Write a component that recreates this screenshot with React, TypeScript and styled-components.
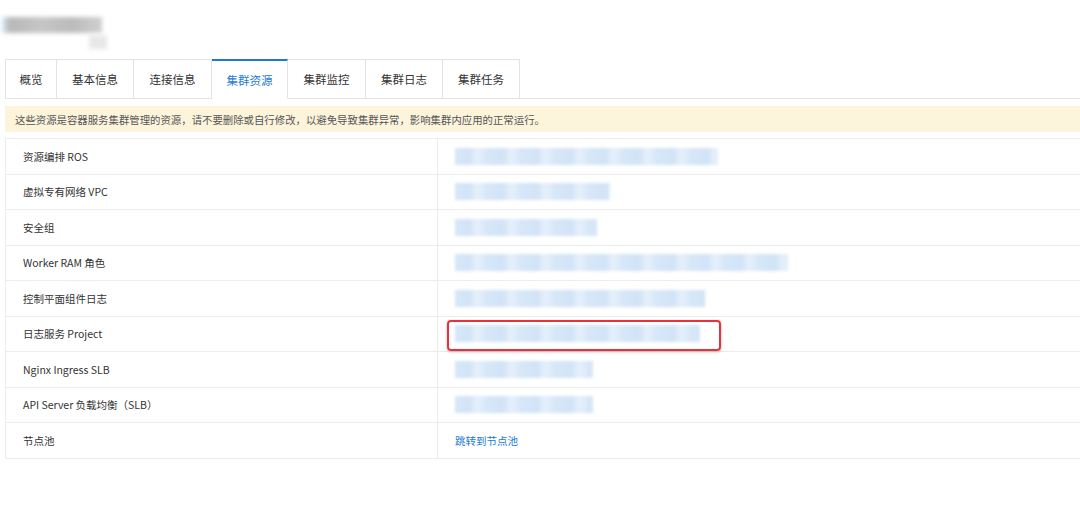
import React from 'react';
import styled, { createGlobalStyle } from 'styled-components';

const GlobalStyle = createGlobalStyle`
  html, body {
    margin: 0;
    padding: 0;
    background: #fff;
    font-family: "Noto Sans CJK SC", "Noto Sans", "Liberation Sans", sans-serif;
    color: #333;
  }
`;

const Page = styled.div`
  width: 1080px;
  height: 529px;
  overflow: hidden;
  padding-left: 5px;
  box-sizing: border-box;
`;

const TitleArea = styled.div`
  height: 59px;
  padding-top: 17px;
  box-sizing: border-box;
  display: flex;
  flex-direction: column;
  gap: 2px;
`;

const BlurTitle = styled.div`
  width: 100px;
  height: 16px;
  background: linear-gradient(90deg, #d6e9f8 0%, #b8b8b8 8%, #c6c6c6 40%, #bbbbbb 70%, #d0d0d0 100%);
  filter: blur(2px);
  margin-left: -3px;
`;

const BlurSub = styled.div`
  width: 18px;
  height: 14px;
  margin-left: 84px;
  background: #e8e8e8;
  filter: blur(2px);
`;

const Tabs = styled.div`
  display: flex;
  height: 40px;
  border-bottom: 1px solid #e3e3e3;
  box-sizing: border-box;
`;

const Tab = styled.div<{ $active?: boolean; $w: number }>`
  width: ${p => p.$w}px;
  box-sizing: border-box;
  display: flex;
  align-items: center;
  justify-content: center;
  font-size: 11.5px;
  color: ${p => (p.$active ? '#1b7ad6' : '#333')};
  background: #fff;
  border: 1px solid #e3e3e3;
  border-left: none;
  border-top: ${p => (p.$active ? '2px solid #1b7ad6' : '1px solid #e3e3e3')};
  border-bottom: ${p => (p.$active ? '1px solid #fff' : 'none')};
  margin-bottom: ${p => (p.$active ? '-1px' : '0')};
  &:first-child {
    border-left: 1px solid #e3e3e3;
  }
`;

const Notice = styled.div`
  margin-top: 7px;
  height: 26px;
  background: #fdf4dc;
  display: flex;
  align-items: center;
  padding-left: 10px;
  font-size: 10.4px;
  color: #555;
`;

const Table = styled.div`
  margin-top: 6px;
  border-top: 1px solid #ececec;
  border-left: 1px solid #ececec;
`;

const Row = styled.div`
  display: grid;
  grid-template-columns: 432px 1fr;
  height: 35.5px;
  border-bottom: 1px solid #ececec;
  box-sizing: border-box;
`;

const Label = styled.div`
  display: flex;
  align-items: center;
  padding-left: 17px;
  font-size: 10.5px;
  color: #333;
  border-right: 1px solid #ececec;
`;

const Value = styled.div`
  position: relative;
  display: flex;
  align-items: center;
  padding-left: 17px;
`;

const BlurValue = styled.div<{ $w: number }>`
  width: ${p => p.$w}px;
  height: 17px;
  background: repeating-linear-gradient(
    90deg,
    #d6e7f8 0px,
    #d1e3f6 14px,
    #e6f0fb 22px,
    #d4e5f7 34px
  );
  filter: blur(1.5px);
`;

const Link = styled.a`
  font-size: 10.5px;
  color: #1b7ad6;
  text-decoration: none;
`;

const Highlight = styled.div`
  position: absolute;
  left: 9px;
  top: 3px;
  width: 274px;
  height: 31px;
  border: 2px solid #e8313b;
  border-radius: 4px;
  box-sizing: border-box;
  box-shadow: 0 1px 3px rgba(0, 0, 0, 0.25);
`;

const tabs = [
  { name: '概览', w: 52 },
  { name: '基本信息', w: 77 },
  { name: '连接信息', w: 78 },
  { name: '集群资源', w: 76, active: true },
  { name: '集群监控', w: 78 },
  { name: '集群日志', w: 77 },
  { name: '集群任务', w: 77 },
];

const rows = [
  { label: '资源编排 ROS', w: 263 },
  { label: '虚拟专有网络 VPC', w: 155 },
  { label: '安全组', w: 142 },
  { label: 'Worker RAM 角色', w: 333 },
  { label: '控制平面组件日志', w: 250 },
  { label: '日志服务 Project', w: 245, highlight: true },
  { label: 'Nginx Ingress SLB', w: 138 },
  { label: 'API Server 负载均衡（SLB）', w: 138 },
];

export default function App() {
  return (
    <>
      <GlobalStyle />
      <Page>
        <TitleArea>
          <BlurTitle />
          <BlurSub />
        </TitleArea>
        <Tabs>
          {tabs.map(t => (
            <Tab key={t.name} $w={t.w} $active={t.active}>
              {t.name}
            </Tab>
          ))}
        </Tabs>
        <Notice>这些资源是容器服务集群管理的资源，请不要删除或自行修改，以避免导致集群异常，影响集群内应用的正常运行。</Notice>
        <Table>
          {rows.map(r => (
            <Row key={r.label}>
              <Label>{r.label}</Label>
              <Value>
                <BlurValue $w={r.w} />
                {r.highlight && <Highlight />}
              </Value>
            </Row>
          ))}
          <Row>
            <Label>节点池</Label>
            <Value>
              <Link href="#">跳转到节点池</Link>
            </Value>
          </Row>
        </Table>
      </Page>
    </>
  );
}
